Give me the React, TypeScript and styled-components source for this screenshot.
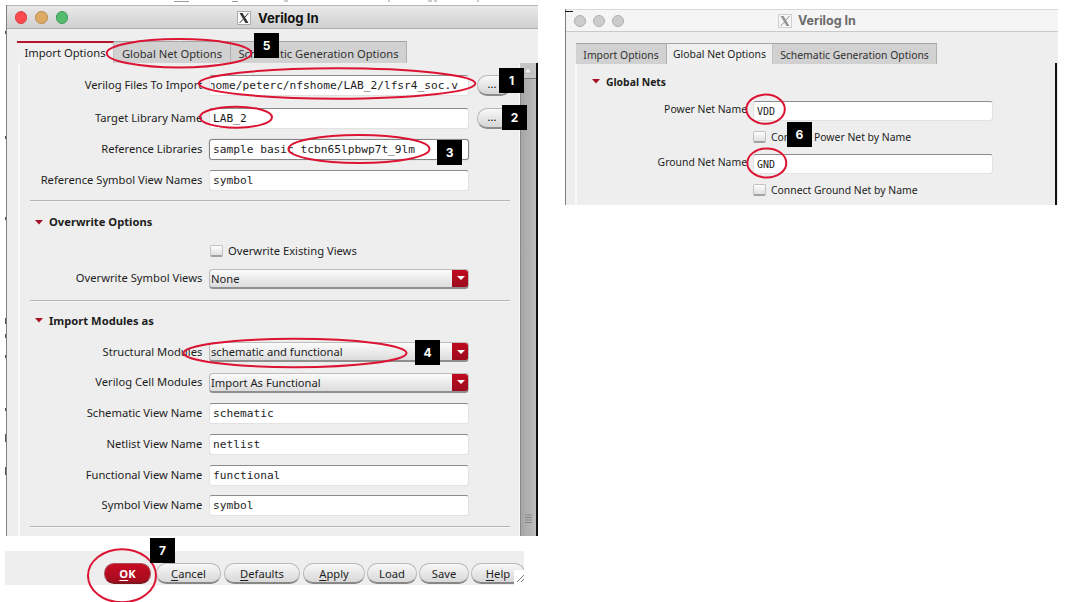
import React from 'react';
import styled, { createGlobalStyle, css } from 'styled-components';

const Global = createGlobalStyle`
  *, *::before, *::after { box-sizing: border-box; }
  body { margin: 0; background: #fff; overflow: hidden; }
`;

const Page = styled.div`
  position: relative;
  width: 1067px;
  height: 602px;
  display: flex;
  align-items: flex-start;
  padding-left: 6px;
  overflow: hidden;
  font-family: 'Noto Sans', 'Open Sans', sans-serif;
  font-size: 11.2px;
  color: #1d1d1d;
  white-space: nowrap;
`;

const LeftColumn = styled.div`
  width: 532px;
  padding-top: 5px;
`;

const RightColumn = styled.div`
  width: 493px;
  margin-left: 27px;
  padding-top: 9px;
  font-size: 10.4px;
`;

const Window = styled.section<{ $height: number }>`
  height: ${p => p.$height}px;
  display: flex;
  flex-direction: column;
  overflow: hidden;
  background: #eeeeee;
  border-left: 1px solid #7f7f7f;
`;

const TitleBar = styled.header<{ $active?: boolean }>`
  flex: none;
  height: ${p => (p.$active ? 24 : 23)}px;
  display: flex;
  align-items: center;
  border-top: 1px solid ${p => (p.$active ? '#b5b5b5' : '#d9d9d9')};
  border-bottom: 1px solid ${p => (p.$active ? '#b0b0b0' : '#c9c9c9')};
  background: ${p => (p.$active ? 'linear-gradient(#e9e9e9, #d0d0d0)' : '#f5f5f5')};
  padding: 1px 0 0 8px;
`;

const Lights = styled.div<{ $active?: boolean }>`
  display: flex;
  gap: ${p => (p.$active ? 8 : 6.5)}px;
  width: ${p => (p.$active ? 222 : 204)}px;
`;

const Light = styled.i<{ $fill: string; $edge: string }>`
  width: 12.4px;
  height: 12.4px;
  border-radius: 50%;
  background: ${p => p.$fill};
  border: 1px solid ${p => p.$edge};
`;

const Title = styled.h1<{ $active?: boolean }>`
  margin: 0 0 0 ${p => (p.$active ? 7 : 6)}px;
  font: 700 ${p => (p.$active ? 13.1 : 12.5)}px/20px Inter, sans-serif;
  color: ${p => (p.$active ? '#111' : '#6b6b6b')};
`;

const Tabs = styled.nav<{ $top: number; $left: number }>`
  flex: none;
  display: flex;
  align-items: flex-end;
  padding: ${p => p.$top}px 0 0 ${p => p.$left}px;
`;

const Tab = styled.div<{ $width: number; $selected?: boolean; $accent?: boolean; $height: number }>`
  width: ${p => p.$width}px;
  height: ${p => p.$height}px;
  text-align: center;
  line-height: ${p => p.$height + 1}px;
  color: #303030;
  background: #d1d1d1;
  border-top: 1px solid #a5a5a5;
  border-right: 1px solid #b0b0b0;
  ${p =>
    p.$selected &&
    css`
      line-height: ${p.$height - 1}px;
      color: #1d1d1d;
      background: #efefef;
      border-right-color: #c0c0c0;
    `}
  ${p =>
    p.$accent &&
    css`
      line-height: ${p.$height - 2}px;
      border-top: 2px solid #b5162b;
    `}
`;

const Body = styled.div<{ $left: number }>`
  flex: 1;
  min-height: 0;
  display: flex;
  margin-left: ${p => p.$left}px;
  border-left: 2px solid #fafafa;
`;

const Form = styled.div<{ $top: number; $edge?: boolean }>`
  flex: 1;
  min-width: 0;
  padding-top: ${p => p.$top}px;
  ${p => p.$edge && 'border-right: 1px solid #fafafa;'}
`;

const Row = styled.div<{ $height: number }>`
  display: flex;
  align-items: center;
  height: ${p => p.$height}px;
`;

const Label = styled.label<{ $width: number; $lift?: number }>`
  flex: none;
  width: ${p => p.$width}px;
  margin-right: 6px;
  padding: 0 ${p => (p.$lift ? 0 : 0.7)}px ${p => p.$lift ?? 1}px 0;
  text-align: right;
  line-height: 16px;
`;

const Field = styled.div<{ $width: number; $focused?: boolean; $small?: boolean; $end?: boolean }>`
  flex: none;
  display: flex;
  justify-content: ${p => (p.$end ? 'flex-end' : 'flex-start')};
  width: ${p => p.$width}px;
  height: ${p => (p.$small ? 20 : 21)}px;
  padding: 0 ${p => (p.$end ? 10 : 0)}px 0 ${p => (p.$end ? 1 : 3)}px;
  overflow: hidden;
  background: #fff;
  border: 1px solid #e2e2e2;
  border-top-color: #8c8c8c;
  border-radius: 3px;
  font: ${p => (p.$small ? 10 : 11.2)}px/20px 'DejaVu Sans Mono', monospace;
  ${p => p.$focused && 'border: 1.5px solid #858585; box-shadow: 0 0 1px #999;'}
`;

const MonoText = styled.span`
  display: flex;
  justify-content: flex-end;
  min-width: 0;
  overflow: hidden;
`;

const Browse = styled.button`
  width: 34px;
  height: 21px;
  margin-left: 8px;
  padding: 0 4px 2px 0;
  border: 1px solid #b8b8b8;
  border-bottom: 2px solid #8b8b8b;
  border-radius: 10px;
  background: linear-gradient(#f8f8f8, #d6d6d6);
  font: 11px/16px 'Noto Sans', sans-serif;
`;

const Select = styled.div`
  flex: none;
  display: flex;
  align-items: stretch;
  width: 260px;
  height: 20px;
  padding-left: 1px;
  overflow: hidden;
  border: 1px solid #bcbcbc;
  border-bottom: 2px solid #8f8f8f;
  border-radius: 4px;
  background: linear-gradient(#fbfbfb, #dcdcdc);
  line-height: 18px;
`;

const SelectText = styled.span`
  flex: 1;
`;

const SelectArrow = styled.span`
  display: flex;
  align-items: center;
  justify-content: center;
  width: 17px;
  margin: -1px -1px -2px 0;
  background: linear-gradient(#c20a20, #990c1d);
  border-bottom: 1px solid #6d1019;
`;

const Rule = styled.hr<{ $gap?: number }>`
  width: 480px;
  height: 2px;
  margin: ${p => p.$gap ?? 4}px 0 0 10px;
  border: 0;
  border-top: 1px solid #b4b4b4;
  border-bottom: 1px solid #f7f7f7;
`;

const Heading = styled.h2<{ $height: number }>`
  display: flex;
  gap: 6px;
  align-items: center;
  height: ${p => p.$height}px;
  margin: 0;
  padding-left: 15px;
  font-size: inherit;
  line-height: 16px;
  font-weight: 700;
`;

const Check = styled.i`
  width: 13px;
  height: 12px;
  margin-right: 5px;
  border: 1px solid #c2c2c2;
  border-bottom: 2px solid #a2a2a2;
  border-radius: 2px;
  background: linear-gradient(#fdfdfd, #e0e0e0);
`;

const CheckRow = styled(Row)<{ $indent: number }>`
  padding-left: ${p => p.$indent}px;
`;

const ScrollBar = styled.aside`
  width: 18px;
  display: flex;
  flex-direction: column;
  border-right: 2px solid #111;
`;

const ScrollUp = styled.div`
  height: 16px;
  display: flex;
  align-items: center;
  justify-content: center;
  background: #c6c6c6;
  border-bottom: 1px solid #777;
`;

const ScrollThumb = styled.div`
  flex: 1;
  display: flex;
  align-items: flex-end;
  justify-content: center;
  padding-bottom: 13px;
  border-left: 1px solid #888;
  background: linear-gradient(90deg, #a5a5a5, #bdbdbd);
`;

const RightEdge = styled.div`
  width: 2px;
  margin-top: -1px;
  margin-right: 1px;
  background: #111;
`;

const Footer = styled.footer`
  display: flex;
  align-items: center;
  width: 519px;
  height: 34px;
  margin: 15px 0 0 -1px;
  padding: 13px 0 0 99px;
  background: #eeeeee;
  overflow: hidden;
`;

const Button = styled.button<{ $width: number; $gap: number; $primary?: boolean }>`
  flex: none;
  width: ${p => p.$width}px;
  height: 21px;
  margin: 0 ${p => p.$gap}px 2px 0;
  padding: 0;
  border: 1px solid #b9b9b9;
  border-bottom: 2px solid #878787;
  border-radius: 10px;
  background: linear-gradient(#f8f8f8, #d8d8d8);
  color: #1d1d1d;
  font: 11.2px/17px 'Noto Sans', sans-serif;
  ${p =>
    p.$primary &&
    css`
      border-color: #a8515b;
      border-bottom-color: #7e1520;
      background: linear-gradient(#c80b22, #a40c1e);
      color: #fff;
      font-weight: 700;
    `}
`;

const Mnemonic = styled.u`
  text-underline-offset: 2px;
`;

const Grip = styled.svg`
  flex: none;
  margin: 0 0 -8px -11px;
  background: #fff;
`;

const Overlay = styled.svg`
  position: absolute;
  inset: 0;
  pointer-events: none;
`;

const Badge = styled.b<{ $x: number; $y: number }>`
  position: absolute;
  left: ${p => p.$x}px;
  top: ${p => p.$y}px;
  width: 25px;
  height: 25px;
  background: #000;
  color: #fff;
  text-align: center;
  font: 700 12px/25px Inter, sans-serif;
`;

const XIcon = ({ dim }: { dim?: boolean }) => (
  <svg width="14" height="14" viewBox="0 0 14 14" opacity={dim ? 0.5 : 1}>
    <rect x=".5" y=".5" width="13" height="13" fill="#fafafa" stroke="#aaa" />
    <path d="M2.5 2h3l6 10h-3z" fill="#333" />
    <path d="M11.5 2 7.6 6.5M6.2 8.2 2.5 12" stroke="#333" strokeWidth="1" />
  </svg>
);

const Triangle = () => (
  <svg width="8" height="5" viewBox="0 0 8 5">
    <path d="M0 0h8L4 4.6z" fill="#a51225" />
  </svg>
);

const Combo = ({ text }: { text: string }) => (
  <Select>
    <SelectText>{text}</SelectText>
    <SelectArrow>
      <svg width="8" height="4" viewBox="0 0 8 4">
        <path d="M0 0h8L4 4z" fill="#fff" />
      </svg>
    </SelectArrow>
  </Select>
);

type TextRowProps = {
  label: string;
  value: string;
  height: number;
  focused?: boolean;
  end?: boolean;
  browse?: boolean;
};

const TextRow = ({ label, value, height, focused, end, browse }: TextRowProps) => (
  <Row $height={height}>
    <Label $width={183}>{label}</Label>
    <Field $width={260} $focused={focused} $end={end}>
      <MonoText>{value}</MonoText>
    </Field>
    {browse && <Browse>...</Browse>}
  </Row>
);

const ELLIPSES = [
  [179, 53.3, 72.3, 14.2],
  [337, 83.5, 138.3, 15.2],
  [236, 117.2, 36, 10.5],
  [359, 149, 70.5, 14],
  [295, 353, 111.5, 14.2],
  [122, 575.7, 34, 26.5],
  [765.6, 109.2, 19.2, 14.6],
  [766.8, 163, 19.5, 14.6],
];

const BADGES: [string, number, number][] = [
  ['5', 254, 33],
  ['1', 499, 68],
  ['2', 502, 105],
  ['3', 437, 140],
  ['4', 415, 340],
  ['7', 150, 538],
  ['6', 787, 122],
];

export default function App() {
  return (
    <Page>
      <Global />
      <LeftColumn>
        <Window $height={531}>
          <TitleBar $active>
            <Lights $active>
              <Light $fill="#fc4b4f" $edge="#d94448" />
              <Light $fill="#dcaa62" $edge="#b98d50" />
              <Light $fill="#55bb6f" $edge="#479a5c" />
            </Lights>
            <XIcon />
            <Title $active>Verilog In</Title>
          </TitleBar>
          <Tabs $top={12} $left={10}>
            <Tab $width={97} $height={22} $selected $accent>Import Options</Tab>
            <Tab $width={117} $height={22}>Global Net Options</Tab>
            <Tab $width={176} $height={22}>Schematic Generation Options</Tab>
          </Tabs>
          <Body $left={11}>
            <Form $top={6} $edge>
              <TextRow label="Verilog Files To Import" value="home/peterc/nfshome/LAB_2/lfsr4_soc.v" height={33} end browse />
              <TextRow label="Target Library Name" value="LAB_2" height={32} browse />
              <TextRow label="Reference Libraries" value="sample basic tcbn65lpbwp7t_9lm" height={31} focused />
              <TextRow label="Reference Symbol View Names" value="symbol" height={31} />
              <Rule />
              <Heading $height={40}><Triangle />Overwrite Options</Heading>
              <CheckRow $height={17} $indent={190}><Check />Overwrite Existing Views</CheckRow>
              <Row $height={39}>
                <Label $width={183}>Overwrite Symbol Views</Label>
                <Combo text="None" />
              </Row>
              <Rule $gap={2} />
              <Heading $height={37}><Triangle />Import Modules as</Heading>
              <Row $height={26}>
                <Label $width={183}>Structural Modules</Label>
                <Combo text="schematic and functional" />
              </Row>
              <Row $height={35}>
                <Label $width={183}>Verilog Cell Modules</Label>
                <Combo text="Import As Functional" />
              </Row>
              <TextRow label="Schematic View Name" value="schematic" height={27} />
              <TextRow label="Netlist View Name" value="netlist" height={34} />
              <TextRow label="Functional View Name" value="functional" height={28} />
              <TextRow label="Symbol View Name" value="symbol" height={33} />
              <Rule />
            </Form>
            <ScrollBar>
              <ScrollUp>
                <svg width="8" height="7" viewBox="0 0 8 7"><path d="M4 0 8 6H0z" fill="#eee" stroke="#999" strokeWidth=".6" /></svg>
              </ScrollUp>
              <ScrollThumb>
                <svg width="7" height="9"><path d="M0 1h7M0 3.5h7M0 6h7M0 8.500h7" stroke="#888" strokeWidth="1" /></svg>
              </ScrollThumb>
            </ScrollBar>
          </Body>
        </Window>
        <Footer>
          <Button $width={47} $gap={5} $primary><Mnemonic>O</Mnemonic>K</Button>
          <Button $width={65} $gap={3}><Mnemonic>C</Mnemonic>ancel</Button>
          <Button $width={76} $gap={3}><Mnemonic>D</Mnemonic>efaults</Button>
          <Button $width={62} $gap={2}><Mnemonic>A</Mnemonic>pply</Button>
          <Button $width={50} $gap={2}>Load</Button>
          <Button $width={50} $gap={2}>Save</Button>
          <Button $width={54} $gap={0}><Mnemonic>H</Mnemonic>elp</Button>
          <Grip width="14" height="17">
            <path d="M3 12 10 5M7 12 10 9" stroke="#777" />
          </Grip>
        </Footer>
      </LeftColumn>

      <RightColumn>
        <Window $height={196}>
          <TitleBar>
            <Lights>
              <Light $fill="#cccccc" $edge="#b0b0b0" />
              <Light $fill="#cccccc" $edge="#b0b0b0" />
              <Light $fill="#cccccc" $edge="#b0b0b0" />
            </Lights>
            <XIcon dim />
            <Title>Verilog In</Title>
          </TitleBar>
          <Tabs $top={11} $left={10}>
            <Tab $width={91} $height={21}>Import Options</Tab>
            <Tab $width={106} $height={21} $selected>Global Net Options</Tab>
            <Tab $width={164} $height={21}>Schematic Generation Options</Tab>
          </Tabs>
          <Body $left={9}>
            <Form $top={0}>
              <Heading $height={35}><Triangle />Global Nets</Heading>
              <Row $height={24}>
                <Label $width={170} $lift={4}>Power Net Name</Label>
                <Field $width={240} $small><MonoText>VDD</MonoText></Field>
              </Row>
              <CheckRow $height={28} $indent={176}><Check />Connect Power Net by Name</CheckRow>
              <Row $height={25}>
                <Label $width={170} $lift={4}>Ground Net Name</Label>
                <Field $width={240} $small><MonoText>GND</MonoText></Field>
              </Row>
              <CheckRow $height={28} $indent={176}><Check />Connect Ground Net by Name</CheckRow>
            </Form>
            <RightEdge />
          </Body>
        </Window>
      </RightColumn>

      <Overlay width="1067" height="602" fill="none">
        <path d="M174 1.500h15M232 1.500h6M284 1h4M388 1h2M428 1h4M434 1h3M477 1h2" stroke="#999" strokeWidth="1" />
        <path d="M565 11.500h8" stroke="#111" />
        <path d="M5.500 31v3M5.500 136v3M5.500 217v3M5.500 318v6M5.500 334v4M5.500 355v3M5.500 408v3M5.500 434v8M5.500 467v8" stroke="#555" />
        {ELLIPSES.map(([cx, cy, rx, ry]) => (
          <ellipse key={`${cx}-${cy}`} cx={cx} cy={cy} rx={rx} ry={ry} stroke="#dc1433" strokeWidth="2" />
        ))}
      </Overlay>
      {BADGES.map(([n, x, y]) => (
        <Badge key={n} $x={x} $y={y}>{n}</Badge>
      ))}
    </Page>
  );
}
